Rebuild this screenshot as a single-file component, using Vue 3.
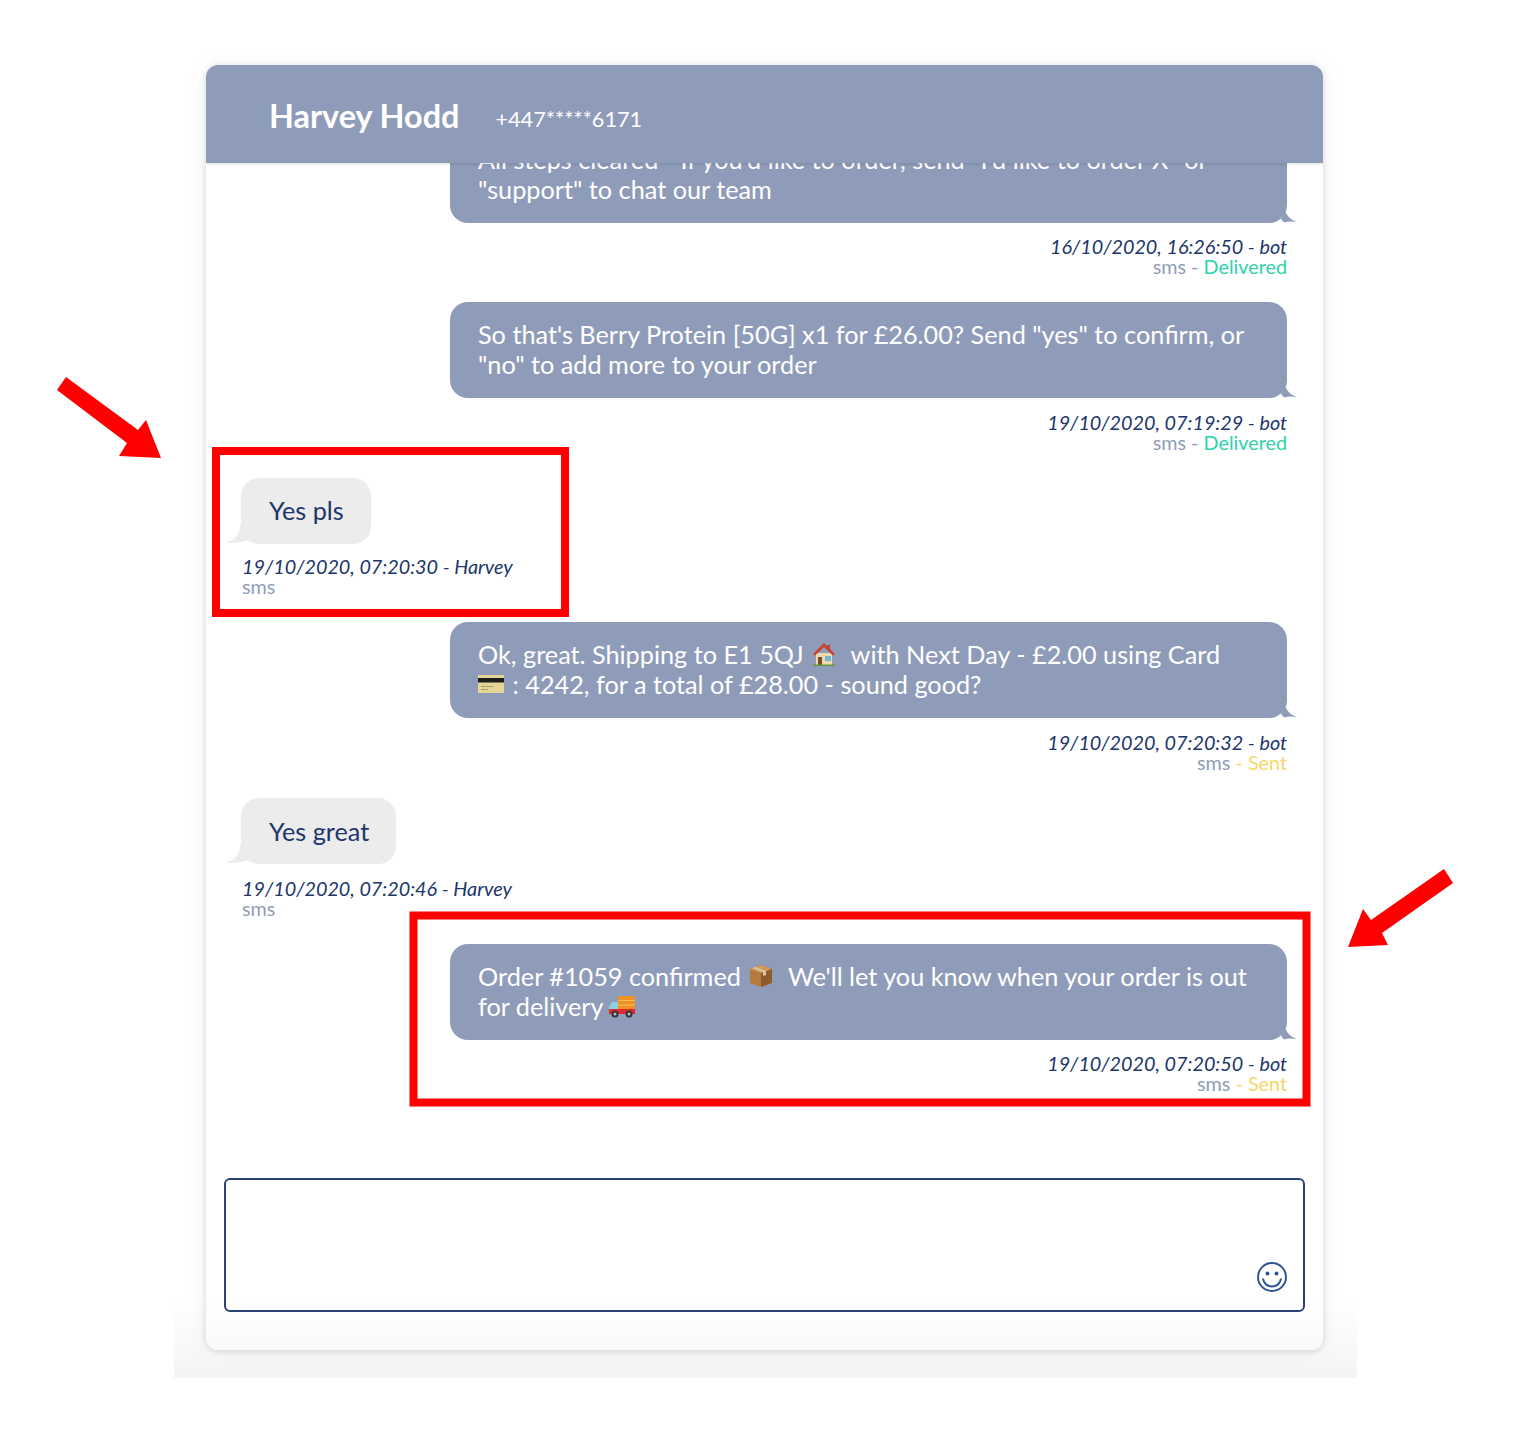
<template>
  <div class="page">
    <div class="stage">
      <div class="chat">
        <header class="chat__header">
          <h1 class="chat__name">Harvey Hodd</h1>
          <span class="chat__phone">+447*****6171</span>
        </header>

        <div class="chat__messages">
          <!-- 1 -->
          <div class="msg msg--bot">
            <div class="bubble bubble--bot">
              All steps cleared - If you'd like to order, send "I'd like to order X" or<br />"support" to chat our team
              <svg class="tail tail--bot" viewBox="0 0 16 12"><path d="M4 0C6 5 10 9 16 11 11 10.500 7 10 3 11.500L0 8Z" fill="#8f9cb9" /></svg>
            </div>
            <div class="meta">
              <div class="meta__time">16/10/2020, 16:26:50 - bot</div>
              <div class="meta__status">sms - <span class="delivered">Delivered</span></div>
            </div>
          </div>

          <!-- 2 -->
          <div class="msg msg--bot msg--wide-gap">
            <div class="bubble bubble--bot">
              So that's Berry Protein [50G] x1 for £26.00? Send "yes" to confirm, or<br />"no" to add more to your order
              <svg class="tail tail--bot" viewBox="0 0 16 12"><path d="M4 0C6 5 10 9 16 11 11 10.500 7 10 3 11.500L0 8Z" fill="#8f9cb9" /></svg>
            </div>
            <div class="meta meta--low">
              <div class="meta__time">19/10/2020, 07:19:29 - bot</div>
              <div class="meta__status">sms - <span class="delivered">Delivered</span></div>
            </div>
          </div>

          <!-- 3 -->
          <div class="msg msg--user">
            <div class="bubble bubble--user">
              Yes pls
              <svg class="tail tail--user" viewBox="0 0 24 28"><path d="M15 4C15 14 10 25 0 27 7 27.500 15 26.500 22 24V10Z" fill="#ececec" /></svg>
            </div>
            <div class="meta meta--left meta--high">
              <div class="meta__time">19/10/2020, 07:20:30 - Harvey</div>
              <div class="meta__status">sms</div>
            </div>
          </div>

          <!-- 4 -->
          <div class="msg msg--bot msg--wide-gap">
            <div class="bubble bubble--bot">
              Ok, great. Shipping to E1 5QJ
              <svg class="emoji" viewBox="0 0 24 24">
                <path d="M4 11h16v12H4z" fill="#ecd9ad" />
                <path d="M12 1 1 12l2 1.500L12 5l9 8.500L23 12 18 7V3h-3v1z" fill="#c8402e" />
                <path d="M6 15h4v8H6z" fill="#7b4a2a" />
                <path d="M13 14h6v5h-6z" fill="#6fb7d8" />
                <path d="M1 22.500h22V24H1z" fill="#5d9a3a" />
              </svg>&nbsp; with Next Day - £2.00 using Card<br />
              <svg class="emoji emoji--card" viewBox="0 0 26 18">
                <path d="M0 0h26v18H0z" fill="#e5d596" />
                <path d="M0 3h26v4.500H0z" fill="#1e1e1e" />
                <path d="M3 11h12v1H3zM3 14h7v1H3z" fill="#a89b66" />
              </svg>
              : 4242, for a total of £28.00 - sound good?
              <svg class="tail tail--bot" viewBox="0 0 16 12"><path d="M4 0C6 5 10 9 16 11 11 10.500 7 10 3 11.500L0 8Z" fill="#8f9cb9" /></svg>
            </div>
            <div class="meta meta--low">
              <div class="meta__time">19/10/2020, 07:20:32 - bot</div>
              <div class="meta__status">sms <span class="sent">- Sent</span></div>
            </div>
          </div>

          <!-- 5 -->
          <div class="msg msg--user">
            <div class="bubble bubble--user bubble--low">
              Yes great
              <svg class="tail tail--user" viewBox="0 0 24 28"><path d="M15 4C15 14 10 25 0 27 7 27.500 15 26.500 22 24V10Z" fill="#ececec" /></svg>
            </div>
            <div class="meta meta--left meta--low">
              <div class="meta__time">19/10/2020, 07:20:46 - Harvey</div>
              <div class="meta__status">sms</div>
            </div>
          </div>

          <!-- 6 -->
          <div class="msg msg--bot msg--wide-gap">
            <div class="bubble bubble--bot">
              Order #1059 confirmed
              <svg class="emoji" viewBox="0 0 24 24">
                <path d="M12 1 23 5v14l-11 4z" fill="#8f5a2c" />
                <path d="M12 1 1 5v14l11 4z" fill="#b77a3e" />
                <path d="M12 1 23 5l-11 4L1 5z" fill="#d09a5e" />
                <path d="M6 3l11 4v4l-3 1V8L3.500 4z" fill="#d9c6a6" />
              </svg>&nbsp; We'll let you know when your order is out<br />for delivery
              <svg class="emoji emoji--truck" viewBox="0 0 26 22">
                <path d="M9 0h17v15H9z" fill="#ee9226" />
                <path d="M9 4.500h17M9 9h17" stroke="#f7bd5c" stroke-width="1" />
                <path d="M3 6h6v9H0v-4z" fill="#8fd0dc" />
                <path d="M0 13h26v5H0z" fill="#e0282e" />
                <circle cx="6" cy="18" r="3.500" fill="#333" />
                <circle cx="20" cy="18" r="3.500" fill="#333" />
                <circle cx="6" cy="18" r="1.500" fill="#bbb" />
                <circle cx="20" cy="18" r="1.500" fill="#bbb" />
              </svg>
              <svg class="tail tail--bot" viewBox="0 0 16 12"><path d="M4 0C6 5 10 9 16 11 11 10.500 7 10 3 11.500L0 8Z" fill="#8f9cb9" /></svg>
            </div>
            <div class="meta">
              <div class="meta__time">19/10/2020, 07:20:50 - bot</div>
              <div class="meta__status">sms <span class="sent">- Sent</span></div>
            </div>
          </div>
        </div>

        <div class="chat__composer">
          <div class="composer">
            <svg class="composer__emoji" viewBox="0 0 30 30" fill="none" stroke="#2f5592">
              <circle cx="15" cy="15" r="14" stroke-width="2" />
              <circle cx="10.500" cy="11.500" r="2" fill="#2f5592" stroke="none" />
              <circle cx="19.500" cy="11.500" r="2" fill="#2f5592" stroke="none" />
              <path d="M6 16.500c.5 5 4.500 8 9 8s8.500-3 9-8" stroke-width="2" />
            </svg>
          </div>
        </div>
      </div>
    </div>

    <svg class="marks" viewBox="0 0 1528 1444">
      <rect x="216" y="451" width="349" height="162" fill="none" stroke="#ff0000" stroke-width="8" />
      <rect x="413.500" y="915.500" width="893" height="187" fill="none" stroke="#ff0000" stroke-width="8" />
      <polygon points="66,377 57,390 127,443 119,456 161,458 146,420 138,430" fill="#ff0000" />
      <polygon points="1444,869 1453,883 1382,933 1388,945 1348,947 1363,909 1371,920" fill="#ff0000" />
    </svg>
  </div>
</template>

<script setup>
</script>

<style>
body {
  background: #fff;
}
</style>

<style scoped>
.page {
  position: relative;
  width: 1528px;
  height: 1444px;
  overflow: hidden;
  background: #fff;
  font-family: Lato, "Open Sans", sans-serif;
}

.stage {
  box-sizing: border-box;
  width: 1183px;
  height: 1378px;
  margin-left: 174px;
  padding: 65px 34px 0 32px;
  overflow: hidden;
  background: linear-gradient(#fff 0, #fff 1300px, #f4f4f4 1378px);
}

.chat {
  display: flex;
  flex-direction: column;
  height: 1285px;
  border-radius: 12px;
  background: linear-gradient(#fff 1230px, #fafafa 1285px);
  overflow: hidden;
  box-shadow: 0 1px 6px rgba(0, 0, 0, 0.14), 0 0 24px rgba(0, 0, 0, 0.05);
}

.chat__header {
  flex: none;
  position: relative;
  z-index: 1;
  display: flex;
  align-items: baseline;
  gap: 36px;
  height: 98px;
  box-sizing: border-box;
  padding: 32px 0 0 63px;
  background: #8f9cb9;
  color: #fff;
  box-shadow: 0 1px 3px rgba(0, 0, 0, 0.15);
}

.chat__name {
  margin: 0;
  font-size: 32.400px;
  line-height: 38px;
  font-weight: 700;
}

.chat__phone {
  font-size: 21.700px;
  position: relative;
  top: -1px;
}

.chat__messages {
  flex: none;
  height: 930px;
  display: flex;
  flex-direction: column;
  justify-content: flex-end;
  overflow: hidden;
  padding: 0 36px 0 35px;
  box-sizing: border-box;
}

.msg {
  flex: none;
  display: flex;
  flex-direction: column;
  margin-top: 25px;
}

.msg--bot {
  align-items: flex-end;
}

.msg--user {
  align-items: flex-start;
  margin-top: 26px;
}

.msg--wide-gap {
  margin-top: 26px;
}

.bubble {
  position: relative;
  box-sizing: border-box;
  font-size: 25.250px;
  line-height: 30px;
  border-radius: 18px;
  padding: 17px 28px 19px;
}

.bubble--bot {
  width: 837px;
  background: #8f9cb9;
  color: #fff;
}

.bubble--user {
  background: #ececec;
  color: #20366b;
  padding-right: 27px;
}

.bubble--low {
  padding-top: 18px;
  padding-bottom: 18px;
}

.tail {
  position: absolute;
}

.tail--bot {
  right: -10px;
  bottom: 0;
  width: 16px;
  height: 12px;
}

.tail--user {
  left: -15px;
  bottom: 0;
  width: 24px;
  height: 28px;
}

.meta {
  margin-top: 13px;
  font-size: 19.800px;
  line-height: 20px;
  text-align: right;
}

.meta--low {
  margin-top: 14px;
}

.meta--high {
  margin-top: 12px;
}

.meta--left {
  text-align: left;
  margin-left: 1px;
}

.meta__time {
  font-style: italic;
  color: #20366b;
}

.meta__status {
  color: #8f9cb9;
}

.delivered {
  color: #2fd1ab;
}

.sent {
  color: #f8d568;
}

.emoji {
  width: 24px;
  height: 24px;
  vertical-align: -2px;
  margin: 0 2px;
}

.emoji--card {
  width: 26px;
  height: 18px;
  margin: 0 2px 0 0;
  vertical-align: 1px;
}

.emoji--truck {
  width: 26px;
  height: 22px;
  margin: 0;
  vertical-align: -2px;
}

.chat__composer {
  flex: 1;
  padding: 85px 18px 0 18px;
}

.composer {
  box-sizing: border-box;
  display: flex;
  justify-content: flex-end;
  align-items: flex-end;
  height: 134px;
  padding: 0 16px 18px;
  border: 2px solid #2a4275;
  border-radius: 6px;
}

.composer__emoji {
  width: 30px;
  height: 30px;
}

.marks {
  position: absolute;
  left: 0;
  top: 0;
  width: 1528px;
  height: 1444px;
  pointer-events: none;
}
</style>
